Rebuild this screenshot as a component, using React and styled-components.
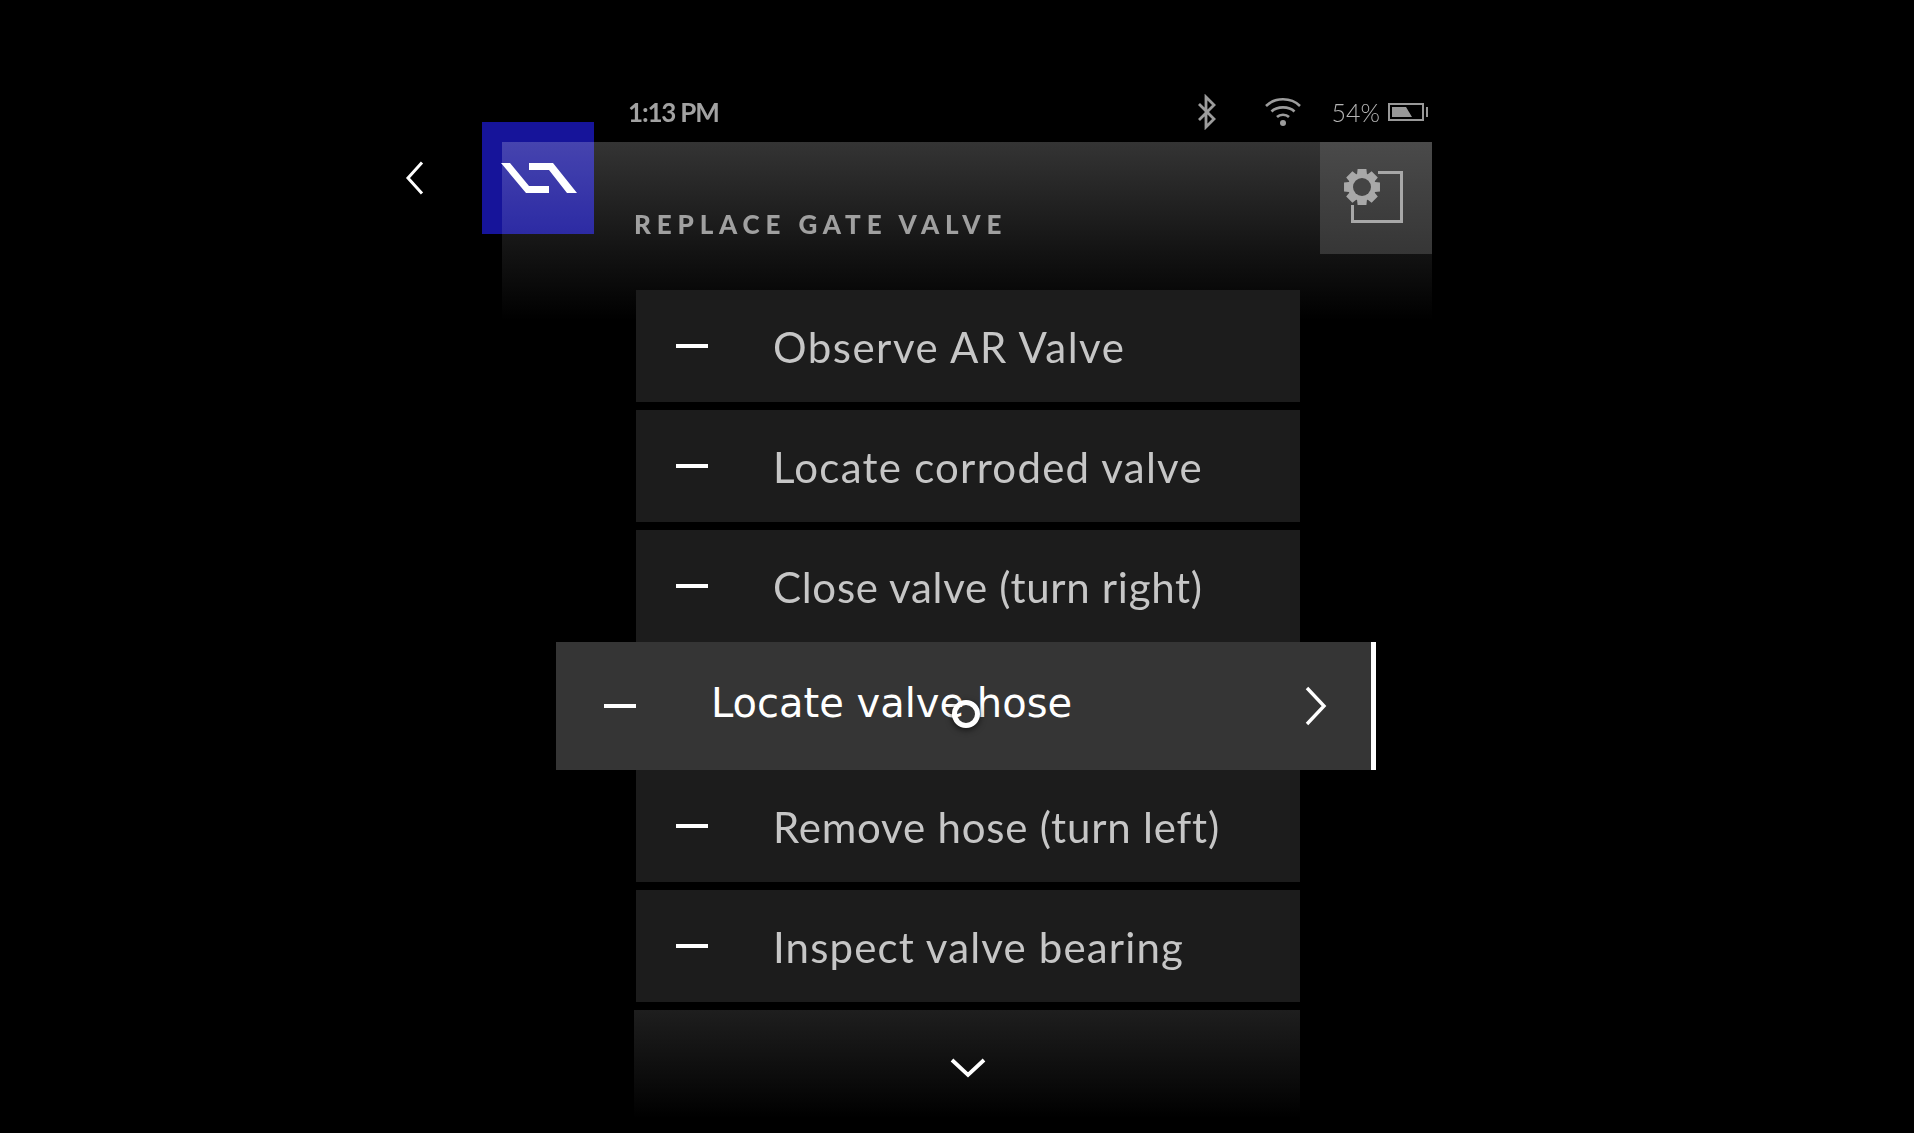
import React from 'react'
import styled, { createGlobalStyle } from 'styled-components'

const GlobalStyle = createGlobalStyle`
  html, body {
    margin: 0;
    background: #000;
  }
  body {
    font-family: Lato, "Open Sans", sans-serif;
  }
`

const Screen = styled.div`
  width: 1914px;
  height: 1133px;
  overflow: hidden;
  background: #000;
  padding: 82px 0 0 502px;
  box-sizing: border-box;
`
const Device = styled.div`
  position: relative;
  width: 930px;
`
const StatusBar = styled.div`
  height: 60px;
  padding: 0 3px 0 126px;
  display: flex;
  align-items: center;
  color: #a2a2a2;
  font-size: 26px;
`
const Time = styled.div`
  flex: 1;
  font-weight: 700;
  letter-spacing: -1.2px;
`
const StatusIcon = styled.svg`
  display: block;
  flex: none;
  margin-left: ${(p) => p.$gap}px;
`
const Percent = styled.div`
  margin-left: 31px;
  font-size: 25px;
  font-weight: 300;
  color: #b4b4b4;
`
const Panel = styled.div`
  height: 178px;
  display: flex;
  justify-content: space-between;
  align-items: flex-start;
  background: linear-gradient(180deg, #343434 0%, #131313 62%, #000 100%);
`
const Title = styled.div`
  margin: 65px 0 0 132px;
  font-size: 26px;
  line-height: 34px;
  font-weight: 900;
  letter-spacing: 5.85px;
  color: #a0a0a0;
`
const SettingsButton = styled.div`
  width: 112px;
  height: 112px;
  display: flex;
  align-items: center;
  justify-content: center;
  background: linear-gradient(180deg, #4a4a4a 0%, #363636 100%);
`
const LogoTile = styled.div`
  position: absolute;
  left: -20px;
  top: 40px;
  width: 112px;
  height: 112px;
  padding-left: 2px;
  box-sizing: border-box;
  background: #16149a;
  mix-blend-mode: screen;
  display: flex;
  align-items: center;
  justify-content: center;
`
const BackButton = styled.svg`
  position: absolute;
  left: -97px;
  top: 79px;
`
const List = styled.div`
  margin: -30px 0 0 134px;
  width: 664px;
  display: flex;
  flex-direction: column;
`
const Row = styled.div`
  height: 112px;
  flex: none;
  margin-bottom: ${(p) => (p.$flush ? 0 : 8)}px;
  display: flex;
  align-items: center;
  background: #1c1c1c;
`
const Dash = styled.div`
  flex: none;
  width: 32px;
  height: 4px;
  margin: ${(p) => (p.$active ? '0 0 0 48px' : '0 0 0 40px')};
  background: #fff;
`
const Label = styled.div`
  margin: 2px 0 0 65px;
  font-size: 42px;
  line-height: 50px;
  letter-spacing: ${(p) => p.$tracking}px;
  color: #c6c6c6;
  white-space: nowrap;
`
const ActiveRow = styled.div`
  position: relative;
  flex: none;
  height: 128px;
  width: 820px;
  box-sizing: border-box;
  margin-left: -80px;
  display: flex;
  align-items: center;
  background: #353535;
  border-right: 5px solid #fff;
`
const ActiveLabel = styled.div`
  margin: -6px 0 0 75px;
  flex: 1;
  font-family: "DejaVu Sans", sans-serif;
  font-size: 40px;
  line-height: 50px;
  color: #fff;
  white-space: nowrap;
`
const ActiveChevron = styled.svg`
  flex: none;
  margin-right: 44px;
`
const Cursor = styled.div`
  position: absolute;
  left: 396px;
  top: 58px;
  width: 28px;
  height: 28px;
  box-sizing: border-box;
  border: 5px solid #fff;
  border-radius: 50%;
  box-shadow: 0 2px 6px rgba(0, 0, 0, 0.6);
`
const ScrollDown = styled.div`
  height: 108px;
  margin-left: -2px;
  width: 666px;
  display: flex;
  justify-content: center;
  padding: 48px 0 0 2px;
  box-sizing: border-box;
  background: linear-gradient(180deg, #1e1e1e 0%, #0b0b0b 65%, #000 100%);
`

const steps = [
  { label: 'Observe AR Valve', tracking: 1.5 },
  { label: 'Locate corroded valve', tracking: 1.25 },
  { label: 'Close valve (turn right)', tracking: 0.7, flush: true },
  { label: 'Locate valve hose', active: true },
  { label: 'Remove hose (turn left)', tracking: 0.8 },
  { label: 'Inspect valve bearing', tracking: 1.15 },
]

// gear teeth, built once instead of writing out the whole path
const gearPath = () => {
  const cx = 26
  const cy = 29
  const pts = []
  for (let i = 0; i < 8; i++) {
    const a = (i * Math.PI) / 4 - Math.PI / 2
    const w = 0.24
    const at = (r, t) => `${(cx + r * Math.cos(t)).toFixed(2)} ${(cy + r * Math.sin(t)).toFixed(2)}`
    pts.push(at(14, a - w * 1.5), at(18.5, a - w), at(18.5, a + w), at(14, a + w * 1.5))
  }
  return `M${pts.join('L')}Z`
}

const App = () => (
  <Screen>
    <GlobalStyle />
    <Device>
      <StatusBar>
        <Time>1:13 PM</Time>
        <StatusIcon $gap={0} width="20" height="36" viewBox="0 0 20 36" fill="none" stroke="#9c9c9c" strokeWidth="2.8">
          <path d="M2 10 L17 25 L9 33 V3 L17 11 L2 26" />
        </StatusIcon>
        <StatusIcon $gap={48} width="36" height="30" viewBox="0 0 36 30" fill="none" stroke="#9c9c9c" strokeWidth="2.6">
          <path d="M1 9 C10 0 26 0 35 9" />
          <path d="M6.5 14.5 C12 9 24 9 29.5 14.5" />
          <path d="M12 20 C15 17 21 17 24 20" />
          <circle cx="18" cy="26" r="3" fill="#9c9c9c" stroke="none" />
        </StatusIcon>
        <Percent>54%</Percent>
        <StatusIcon $gap={8} width="41" height="18" viewBox="0 0 41 18" fill="none">
          <rect x="1" y="1" width="34" height="16" stroke="#999" strokeWidth="2" />
          <path d="M4 4 H18 L24 14 H4 Z" fill="#999" />
          <rect x="38" y="4" width="2" height="10" fill="#999" />
        </StatusIcon>
      </StatusBar>
      <Panel>
        <Title>REPLACE GATE VALVE</Title>
        <SettingsButton>
          <svg width="80" height="80" viewBox="0 0 80 80" fill="none">
            <path d="M16.5 47 V63.5 H65.5 V14.5 H42" stroke="#a8a8a8" strokeWidth="3" />
            <path d={gearPath()} fill="#a8a8a8" />
            <circle cx="26" cy="29" r="9" fill="#444" />
          </svg>
        </SettingsButton>
      </Panel>
      <BackButton width="20" height="34" viewBox="0 0 20 34" fill="none" stroke="#fff" strokeWidth="3">
        <path d="M17 1.5 L3 17 L17 32.5" />
      </BackButton>
      <LogoTile>
        <svg width="76" height="30" viewBox="0 0 76 30" fill="#fff">
          <path d="M0 0 H9 L28 23 H48 V30 H25 Z" />
          <path d="M28 0 H52 L76 30 H66 L48 7 H28 Z" />
        </svg>
      </LogoTile>
      <List>
        {steps.map((step) =>
          step.active ? (
            <ActiveRow key={step.label}>
              <Dash $active />
              <ActiveLabel>{step.label}</ActiveLabel>
              <ActiveChevron width="22" height="40" viewBox="0 0 22 40" fill="none" stroke="#fff" strokeWidth="3.4">
                <path d="M2 2 L19 20 L2 38" />
              </ActiveChevron>
              <Cursor />
            </ActiveRow>
          ) : (
            <Row key={step.label} $flush={step.flush}>
              <Dash />
              <Label $tracking={step.tracking}>{step.label}</Label>
            </Row>
          )
        )}
        <ScrollDown>
          <svg width="36" height="20" viewBox="0 0 36 20" fill="none" stroke="#fff" strokeWidth="3.8">
            <path d="M2 2 L18 17 L34 2" />
          </svg>
        </ScrollDown>
      </List>
    </Device>
  </Screen>
)

export default App
